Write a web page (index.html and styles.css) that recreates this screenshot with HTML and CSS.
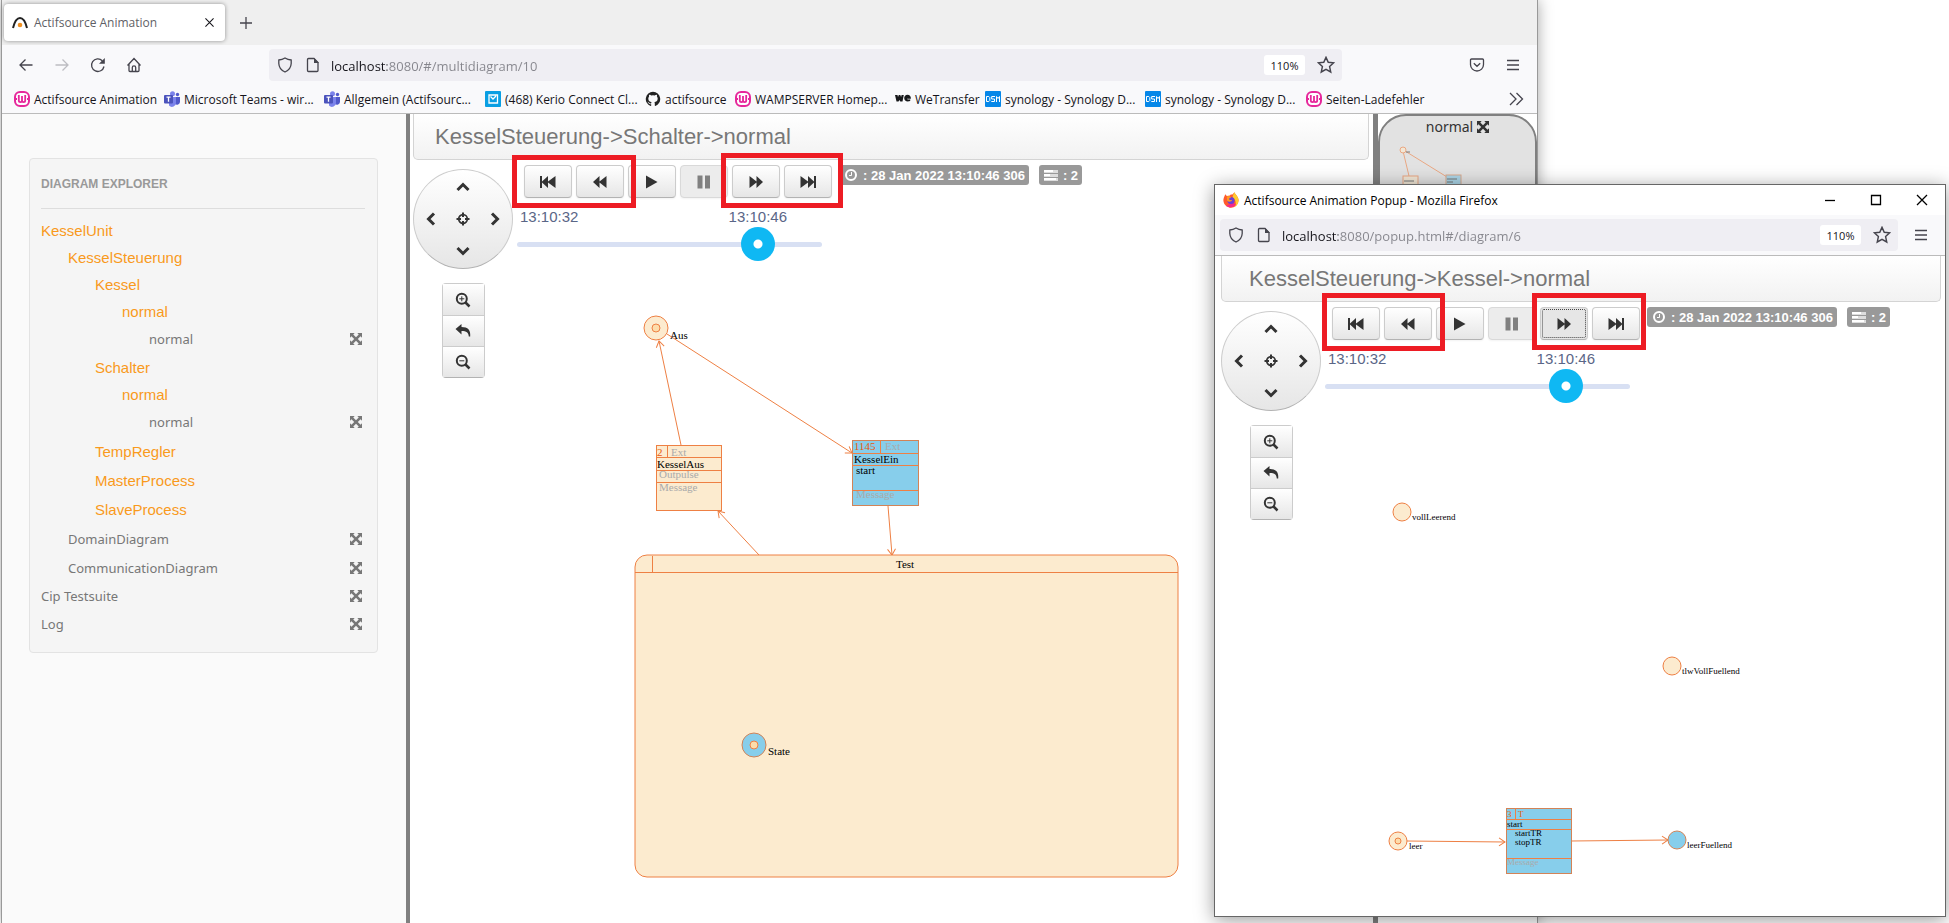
FILE: index.html
```html
<!DOCTYPE html>
<html lang="en">

<head>
  <meta charset="UTF-8">
  <meta name="viewport" content="width=device-width, initial-scale=1.0">
  <title>Actifsource Animation</title>

  <link rel="stylesheet" href="styles.css">
</head>

<body>
  <!-- shared icons -->
  <svg class="sprite" aria-hidden="true">
    <symbol id="i-back" viewBox="0 0 16 16"><path d="M14.500 8H2M7.500 2.500 2 8l5.500 5.500" class="line"/></symbol>
    <symbol id="i-forward" viewBox="0 0 16 16"><path d="M1.500 8H14M8.500 2.500 14 8l-5.500 5.500" class="line"/></symbol>
    <symbol id="i-reload" viewBox="0 0 16 16"><path d="M14 9.500A6.300 6.300 0 1 1 12.300 3.700" class="line"/><path d="M14.800 1v5.800H9z"/></symbol>
    <symbol id="i-home" viewBox="0 0 16 16"><path d="M1.500 8.500 8 1.500l6.500 7M3 7v6.500a1 1 0 0 0 1 1h8a1 1 0 0 0 1-1V7M6.300 14.500v-4a1.700 1.700 0 0 1 3.400 0v4" class="line"/></symbol>
    <symbol id="i-shield" viewBox="0 0 16 16"><path d="M8 1C6 2.300 4 2.900 1.800 3v3.500C2 10.500 4.500 13.500 8 15c3.500-1.500 6-4.500 6.200-8.500V3C12 2.900 10 2.300 8 1z" class="line"/></symbol>
    <symbol id="i-page" viewBox="0 0 16 16"><path d="M3.500 1.500H9l4 4v8a1 1 0 0 1-1 1H3.500a1 1 0 0 1-1-1v-11a1 1 0 0 1 1-1z" class="line"/><path d="M9 1v5h5z"/></symbol>
    <symbol id="i-star" viewBox="0 0 16 16"><path d="M8 1.200l2 4.400 4.800.500-3.600 3.300 1 4.800L8 11.800l-4.200 2.400 1-4.800L1.200 6.100 6 5.600z" class="line"/></symbol>
    <symbol id="i-pocket" viewBox="0 0 16 16"><path d="M2.500 2h11a1 1 0 0 1 1 1v4.500a6.500 6.500 0 0 1-13 0V3a1 1 0 0 1 1-1zM4.800 6.300 8 9.300l3.200-3" class="line"/></symbol>
    <symbol id="i-menu" viewBox="0 0 16 16"><path d="M2 3.500h12M2 8h12M2 12.500h12" class="line"/></symbol>
    <symbol id="i-more" viewBox="0 0 16 16"><path d="M2 2l6 6-6 6M8.500 2l6 6-6 6" class="line"/></symbol>
    <symbol id="i-close" viewBox="0 0 16 16"><path d="M3 3l10 10M13 3 3 13" class="line"/></symbol>
    <symbol id="i-plus" viewBox="0 0 16 16"><path d="M8 2v12M2 8h12" class="line"/></symbol>
    <symbol id="i-min" viewBox="0 0 16 16"><path d="M3 8.500h10" class="line"/></symbol>
    <symbol id="i-max" viewBox="0 0 16 16"><path d="M3.500 3.500h9v9h-9z" class="line"/></symbol>
    <symbol id="i-actif" viewBox="0 0 16 16"><path d="M1 13C2.500 7 5 3 8 3s5.500 4 7 10" fill="none" stroke="#222" stroke-width="2"/><circle cx="8" cy="10" r="2.300" fill="#f09020"/></symbol>
    <symbol id="i-wamp" viewBox="0 0 16 16"><rect x="1" y="1" width="14" height="14" rx="5" fill="#fff" stroke="#e6279b" stroke-width="2"/><path d="M4.800 4v5.500a1.600 1.600 0 0 0 3.200 0V5v4.500a1.600 1.600 0 0 0 3.200 0V4M1 8h2M13 8h2" fill="none" stroke="#e6279b" stroke-width="1.800"/></symbol>
    <symbol id="i-teams" viewBox="0 0 16 16"><circle cx="8.500" cy="2.800" r="2.500" fill="#7b83eb"/><circle cx="13.500" cy="3.500" r="1.700" fill="#5059c9"/><path d="M11 6h5v5a3 3 0 0 1-5 2z" fill="#5059c9"/><path d="M5 6h7v5.500a4 4 0 0 1-7 3z" fill="#7b83eb"/><rect y="4" width="9" height="8.500" rx="1" fill="#4b53bc"/><path d="M2.500 6.200h4M4.500 6.200v4.600" stroke="#fff" stroke-width="1.300"/></symbol>
    <symbol id="i-kerio" viewBox="0 0 16 16"><rect width="16" height="16" rx="1" fill="#0a9fe3"/><path d="M4 4h8.500v8H4zM5.500 5.500 8 8l3-3" fill="none" stroke="#fff" stroke-width="1.300"/></symbol>
    <symbol id="i-github" viewBox="0 0 16 16"><path fill="#222" d="M8 .8a7.300 7.300 0 0 0-2.300 14.200c.4.100.5-.2.500-.4v-1.400c-2 .4-2.500-.9-2.500-.9-.3-.8-.8-1-.8-1-.7-.5 0-.5 0-.5.700.1 1.100.8 1.100.8.700 1.100 1.700.8 2.200.6 0-.5.200-.8.400-1-1.600-.2-3.300-.8-3.300-3.600 0-.8.300-1.400.8-2-.1-.1-.3-.9.100-1.900 0 0 .6-.2 2 .7a7 7 0 0 1 3.600 0c1.400-.9 2-.7 2-.7.4 1 .1 1.800.1 1.900.5.600.8 1.200.8 2 0 2.800-1.700 3.400-3.300 3.600.2.200.4.600.4 1.300v2.100c0 .2.100.5.500.4A7.300 7.300 0 0 0 8 .8z"/></symbol>
    <symbol id="i-we" viewBox="0 0 16 16"><path d="M0 4h2.500l.5 2 .8-2h1.500l.8 2 .5-2h2.200L7.500 10.500H5.300L4.500 9l-1 1.500H1.500zM12.500 3.800c2 0 3.500 1.500 3.400 4h-4c.3.900 1.800 1 3.300.5v1.700c-3 1.200-6 .2-6-2.900 0-2 1.400-3.300 3.300-3.300z" fill="#17181a"/></symbol>
    <symbol id="i-dsm" viewBox="0 0 16 16"><rect width="16" height="16" rx="1" fill="#0687e8"/><path d="M1.500 5.500h2.300l1 1v3l-1 1H1.500zM10 5.500H6.700V8H9.500v2.500H6.300M11.500 11V5.500l1.500 2 1.500-2V11" fill="none" stroke="#fff"/></symbol>
    <symbol id="i-firefox" viewBox="0 0 16 16"><path d="M11.500.3c.3 2 3.900 3.800 4.100 8A7.600 7.600 0 1 1 .9 5.500L2.300 2.200l1.500 1.900 3-.6 1-.9 1.600-.1z" fill="#ff5a2c"/><path d="M11.500.3C11.800 2.300 15.400 4.100 15.600 8.300c0 3-1.600 5.300-3.600 6.500 1.700-3.500.5-7.800-2.500-9.300.5-2 1-3.900 2-5.200z" fill="#ffcb2e"/><path d="M3 14c3 2 8 1.500 10-2l-4-1z" fill="#f5288c"/><circle cx="8" cy="8.500" r="3.600" fill="#6a3fd6"/><path d="M3.800 4.500c1.500-1 3.500-.5 4.500 1-1.500 0-1.700 1-2.500 1.500.6 1 2 1.500 3.500.8-.5 2-3.500 2.800-5.200 1z" fill="#ff9a1f"/></symbol>

    <symbol id="i-fast-backward" viewBox="0 0 16 14"><path d="M0 1h2v5.500L8 1v5.500L15.500 1v12L8 7.500V13L2 7.500V13H0z"/></symbol>
    <symbol id="i-backward" viewBox="0 0 16 14"><path d="M1 7l6.500-6v5.500L14.500 1v12L7.500 7.500V13z"/></symbol>
    <symbol id="i-play" viewBox="0 0 16 14"><path d="M2 .5 13.500 7 2 13.500z"/></symbol>
    <symbol id="i-pause" viewBox="0 0 16 14"><path d="M1.500.5H6.500v13H1.500zM9 .5h5v13H9z"/></symbol>
    <symbol id="i-forward2" viewBox="0 0 16 14"><path d="M15 7l-6.500 6V7.500L1.500 13V1l7 5.500V1z"/></symbol>
    <symbol id="i-fast-forward" viewBox="0 0 16 14"><path d="M16 13h-2V7.500L8 13V7.500L.5 13V1L8 6.500V1l6 5.500V1h2z"/></symbol>
    <symbol id="i-chevron" viewBox="0 0 16 16"><path d="M2.500 11 8 5.500l5.500 5.500" fill="none" stroke="currentColor" stroke-width="3"/></symbol>
    <symbol id="i-target" viewBox="0 0 16 16"><circle cx="8" cy="8" r="4.300" fill="none" stroke="currentColor" stroke-width="1.700"/><path d="M8 1.500v4.500M8 10v4.500M1.500 8h4.500M10 8h4.500" stroke="currentColor" stroke-width="2"/></symbol>
    <symbol id="i-zoom-in" viewBox="0 0 16 16"><circle cx="6.800" cy="6.800" r="5" fill="none" stroke="currentColor" stroke-width="2"/><path d="M10.500 10.500l4 4" stroke="currentColor" stroke-width="2.500"/><path d="M4.300 6.800h5M6.800 4.300v5" stroke="currentColor"/></symbol>
    <symbol id="i-zoom-out" viewBox="0 0 16 16"><circle cx="6.800" cy="6.800" r="5" fill="none" stroke="currentColor" stroke-width="2"/><path d="M10.500 10.500l4 4" stroke="currentColor" stroke-width="2.500"/><path d="M4.300 6.800h5" stroke="currentColor"/></symbol>
    <symbol id="i-reply" viewBox="0 0 16 16"><path d="M6.500 1v3C13 4 15.800 7 15.200 13.500h-1.400C13.500 9.500 11.500 8 6.500 8v3.500L.5 6z"/></symbol>
    <symbol id="i-expand" viewBox="0 0 14 14"><path d="M0 0h5.500L3.800 1.700 7 4.900l3.200-3.200L8.500 0H14v5.500l-1.700-1.700L9.100 7l3.200 3.200L14 8.500V14H8.500l1.700-1.700L7 9.100l-3.200 3.200L5.500 14H0V8.500l1.700 1.700L4.900 7 1.700 3.800 0 5.500z"/></symbol>
    <symbol id="i-clock" viewBox="0 0 14 14"><circle cx="7" cy="7" r="5" fill="none" stroke="currentColor" stroke-width="2"/><path d="M7.500 4v3.500H5" fill="none" stroke="currentColor"/></symbol>
    <symbol id="i-tasks" viewBox="0 0 14 12"><path d="M0 1h14v3H0zM0 5h14v3H0zM0 9h14v3H0z" fill="#ddd"/><path d="M0 1h9v2H0zM0 5h6v2H0zM0 9h12v2H0z"/></symbol>

    <marker id="arrow" viewBox="-8 -6 9 12" refX="0" refY="0" markerWidth="9" markerHeight="12" orient="auto">
      <path d="M-6-4 0 0l-6 4" class="edge"/>
    </marker>
  </svg>

  <main class="window main-window">
    <div class="tabs">
      <div class="tab">
        <svg class="icon"><use href="#i-actif"/></svg>
        <span class="tab-title">Actifsource Animation</span>
        <button class="tab-close" aria-label="Close tab"><svg class="icon-small"><use href="#i-close"/></svg></button>
      </div>
      <button class="tool" aria-label="New tab"><svg class="icon"><use href="#i-plus"/></svg></button>
    </div>

    <div class="toolbar">
      <button class="tool" aria-label="Back"><svg class="icon"><use href="#i-back"/></svg></button>
      <button class="tool" aria-label="Forward" disabled><svg class="icon"><use href="#i-forward"/></svg></button>
      <button class="tool" aria-label="Reload"><svg class="icon"><use href="#i-reload"/></svg></button>
      <button class="tool" aria-label="Home"><svg class="icon"><use href="#i-home"/></svg></button>
      <div class="urlbar urlbar-wide">
        <svg class="icon"><use href="#i-shield"/></svg>
        <svg class="icon"><use href="#i-page"/></svg>
        <input class="url" type="text" aria-label="Address" value="localhost:8080/#/multidiagram/10">
        <button class="zoom-level">110%</button>
        <button class="star" aria-label="Bookmark this page"><svg class="icon-star"><use href="#i-star"/></svg></button>
      </div>
      <button class="tool" aria-label="Pocket"><svg class="icon"><use href="#i-pocket"/></svg></button>
      <button class="tool" aria-label="Menu"><svg class="icon"><use href="#i-menu"/></svg></button>
    </div>

    <nav class="bookmarks">
      <a href="#"><svg class="icon"><use href="#i-wamp"/></svg>Actifsource Animation</a>
      <a href="#"><svg class="icon"><use href="#i-teams"/></svg>Microsoft Teams - wir...</a>
      <a href="#"><svg class="icon"><use href="#i-teams"/></svg>Allgemein (Actifsourc...</a>
      <a href="#"><svg class="icon"><use href="#i-kerio"/></svg>(468) Kerio Connect Cl...</a>
      <a href="#"><svg class="icon"><use href="#i-github"/></svg>actifsource</a>
      <a href="#"><svg class="icon"><use href="#i-wamp"/></svg>WAMPSERVER Homep...</a>
      <a href="#"><svg class="icon"><use href="#i-we"/></svg>WeTransfer</a>
      <a href="#"><svg class="icon"><use href="#i-dsm"/></svg>synology - Synology D...</a>
      <a href="#"><svg class="icon"><use href="#i-dsm"/></svg>synology - Synology D...</a>
      <a href="#"><svg class="icon"><use href="#i-wamp"/></svg>Seiten-Ladefehler</a>
      <button class="more" aria-label="More bookmarks"><svg class="icon"><use href="#i-more"/></svg></button>
    </nav>

    <div class="columns">
      <aside class="sidebar">
        <div class="explorer">
          <h2>Diagram Explorer</h2>
          <ul class="tree">
            <li><a class="unit" href="#">KesselUnit</a>
              <ul>
                <li><a class="unit" href="#">KesselSteuerung</a>
                  <ul>
                    <li><a class="unit" href="#">Kessel</a>
                      <ul>
                        <li><a class="unit" href="#">normal</a>
                          <ul class="leaves">
                            <li><a class="leaf" href="#">normal<svg class="expand"><use href="#i-expand"/></svg></a></li>
                          </ul>
                        </li>
                      </ul>
                    </li>
                    <li><a class="unit" href="#">Schalter</a>
                      <ul>
                        <li><a class="unit" href="#">normal</a>
                          <ul class="leaves">
                            <li><a class="leaf" href="#">normal<svg class="expand"><use href="#i-expand"/></svg></a></li>
                          </ul>
                        </li>
                      </ul>
                    </li>
                    <li><a class="unit tall" href="#">TempRegler</a></li>
                    <li><a class="unit tall" href="#">MasterProcess</a></li>
                    <li><a class="unit tall" href="#">SlaveProcess</a></li>
                  </ul>
                </li>
                <li><a class="leaf tall" href="#">DomainDiagram<svg class="expand"><use href="#i-expand"/></svg></a></li>
                <li><a class="leaf tall" href="#">CommunicationDiagram<svg class="expand"><use href="#i-expand"/></svg></a></li>
              </ul>
            </li>
            <li><a class="leaf" href="#">Cip Testsuite<svg class="expand"><use href="#i-expand"/></svg></a></li>
            <li><a class="leaf tall" href="#">Log<svg class="expand"><use href="#i-expand"/></svg></a></li>
          </ul>
        </div>
      </aside>

      <section class="pane">
        <svg class="canvas">
          <path class="edge" d="M271 331 249 227" marker-end="url(#arrow)"/>
          <path class="edge" d="M257 220 442 339" marker-end="url(#arrow)"/>
          <path class="edge" d="M478 392 482 441" marker-end="url(#arrow)"/>
          <path class="edge" d="M349 441 308 397" marker-end="url(#arrow)"/>

          <circle class="node" cx="246" cy="214" r="12"/>
          <circle class="dot" cx="246" cy="214" r="4"/>
          <text x="260" y="225">Aus</text>

          <rect class="node crisp" x="246" y="331" width="65" height="65"/>
          <path class="edge crisp" d="M246 343h65M246 356h65M246 368h65M257 331v12"/>
          <text class="num" x="247" y="342">2</text>
          <text class="hint" x="261" y="342">Ext</text>
          <text x="247" y="354">KesselAus</text>
          <text class="hint" x="249" y="364">Outpulse</text>
          <text class="hint" x="249" y="377">Message</text>

          <rect class="node active crisp" x="442" y="326" width="66" height="65"/>
          <path class="edge crisp" d="M442 339h66M442 351h66M442 376h66M470 326v13"/>
          <text class="num" x="444" y="336">1145</text>
          <text class="hint" x="475" y="336">Ext</text>
          <text x="444" y="349">KesselEin</text>
          <text x="446" y="360">start</text>
          <text class="hint" x="446" y="384">Message</text>

          <rect class="node" x="225" y="441" width="543" height="322" rx="12"/>
          <path class="edge crisp" d="M225 458h543M242 442v16"/>
          <text x="486" y="454">Test</text>
          <circle class="node active" cx="344" cy="631" r="12"/>
          <circle class="dot" cx="344" cy="631" r="4"/>
          <text x="358" y="641">State</text>
        </svg>

        <h1 class="pane-title">KesselSteuerung-&gt;Schalter-&gt;normal</h1>
        <div class="controls">
          <div class="navigation">
            <div class="joystick">
              <button class="up" aria-label="Up"><svg class="icon"><use href="#i-chevron"/></svg></button>
              <button class="left" aria-label="Left"><svg class="icon"><use href="#i-chevron"/></svg></button>
              <button class="center" aria-label="Center"><svg class="icon"><use href="#i-target"/></svg></button>
              <button class="right" aria-label="Right"><svg class="icon"><use href="#i-chevron"/></svg></button>
              <button class="down" aria-label="Down"><svg class="icon"><use href="#i-chevron"/></svg></button>
            </div>
            <div class="zoom">
              <button aria-label="Zoom in"><svg class="icon"><use href="#i-zoom-in"/></svg></button>
              <button aria-label="Reset zoom"><svg class="icon"><use href="#i-reply"/></svg></button>
              <button aria-label="Zoom out"><svg class="icon"><use href="#i-zoom-out"/></svg></button>
            </div>
          </div>
          <div class="timeline">
            <div class="player">
              <button class="btn" aria-label="First"><svg class="glyph"><use href="#i-fast-backward"/></svg></button>
              <button class="btn" aria-label="Previous"><svg class="glyph"><use href="#i-backward"/></svg></button>
              <button class="btn" aria-label="Play"><svg class="glyph"><use href="#i-play"/></svg></button>
              <button class="btn" aria-label="Pause" disabled><svg class="glyph"><use href="#i-pause"/></svg></button>
              <button class="btn" aria-label="Next"><svg class="glyph"><use href="#i-forward2"/></svg></button>
              <button class="btn" aria-label="Last"><svg class="glyph"><use href="#i-fast-forward"/></svg></button>
            </div>
            <div class="times"><span>13:10:32</span><span>13:10:46</span></div>
            <input class="slider" type="range" min="0" max="240" value="198" aria-label="Time">
          </div>
          <div class="labels">
            <span class="label"><svg class="icon-label"><use href="#i-clock"/></svg>: 28 Jan 2022 13:10:46 306</span>
            <span class="label"><svg class="icon-label"><use href="#i-tasks"/></svg>: 2</span>
          </div>
        </div>
        <div class="highlight highlight-back"></div>
        <div class="highlight highlight-next"></div>
      </section>

      <aside class="thumbs">
        <div class="thumb">
          <a href="#">normal<svg class="expand"><use href="#i-expand"/></svg></a>
          <svg class="preview">
            <path class="edge" d="M23 13 29 38M25 13 67 39"/>
            <circle class="node" cx="23" cy="12" r="3"/>
            <path d="M26 14h4" stroke="#333"/>
            <rect class="node" x="23" y="38" width="15" height="15"/>
            <path d="M24 43h10" stroke="#333"/>
            <rect class="node active" x="66" y="37" width="15" height="15"/>
            <path d="M67 41h10M67 44h6" stroke="#333"/>
          </svg>
        </div>
      </aside>
    </div>
  </main>

  <section class="window popup">
    <header class="titlebar">
      <svg class="icon"><use href="#i-firefox"/></svg>
      <span class="window-title">Actifsource Animation Popup - Mozilla Firefox</span>
      <button aria-label="Minimize"><svg class="icon"><use href="#i-min"/></svg></button>
      <button aria-label="Maximize"><svg class="icon"><use href="#i-max"/></svg></button>
      <button aria-label="Close"><svg class="icon"><use href="#i-close"/></svg></button>
    </header>

    <div class="toolbar">
      <div class="urlbar">
        <svg class="icon"><use href="#i-shield"/></svg>
        <svg class="icon"><use href="#i-page"/></svg>
        <input class="url" type="text" aria-label="Popup address" value="localhost:8080/popup.html#/diagram/6">
        <button class="zoom-level">110%</button>
        <button class="star" aria-label="Bookmark popup"><svg class="icon-star"><use href="#i-star"/></svg></button>
      </div>
      <button class="tool" aria-label="Popup menu"><svg class="icon"><use href="#i-menu"/></svg></button>
    </div>

    <div class="pane">
      <svg class="canvas">
        <path class="edge" d="M192 585 290 586" marker-end="url(#arrow)"/>
        <path class="edge" d="M356 585 453 584" marker-end="url(#arrow)"/>

        <circle class="node" cx="187" cy="256" r="9"/>
        <text x="197" y="264">vollLeerend</text>
        <circle class="node" cx="457" cy="410" r="9"/>
        <text x="467" y="418">tlwVollFuellend</text>
        <circle class="node" cx="183" cy="585" r="9"/>
        <circle class="dot" cx="183" cy="585" r="3"/>
        <text x="194" y="593">leer</text>

        <rect class="node active crisp" x="291" y="552" width="65" height="65"/>
        <path class="edge crisp" d="M291 563h65M291 573h65M291 602h65M300 552v11"/>
        <text class="num" x="292" y="561">3</text>
        <text class="num" x="303" y="561">T</text>
        <text x="292" y="571">start</text>
        <text x="300" y="580">startTR</text>
        <text x="300" y="589">stopTR</text>
        <text class="hint" x="292" y="609">Message</text>

        <circle class="node active" cx="462" cy="584" r="9"/>
        <text x="472" y="592">leerFuellend</text>
      </svg>

      <h1 class="pane-title">KesselSteuerung-&gt;Kessel-&gt;normal</h1>
      <div class="controls">
        <div class="navigation">
          <div class="joystick">
            <button class="up" aria-label="Up"><svg class="icon"><use href="#i-chevron"/></svg></button>
            <button class="left" aria-label="Left"><svg class="icon"><use href="#i-chevron"/></svg></button>
            <button class="center" aria-label="Center"><svg class="icon"><use href="#i-target"/></svg></button>
            <button class="right" aria-label="Right"><svg class="icon"><use href="#i-chevron"/></svg></button>
            <button class="down" aria-label="Down"><svg class="icon"><use href="#i-chevron"/></svg></button>
          </div>
          <div class="zoom">
            <button aria-label="Zoom in"><svg class="icon"><use href="#i-zoom-in"/></svg></button>
            <button aria-label="Reset zoom"><svg class="icon"><use href="#i-reply"/></svg></button>
            <button aria-label="Zoom out"><svg class="icon"><use href="#i-zoom-out"/></svg></button>
          </div>
        </div>
        <div class="timeline">
          <div class="player">
            <button class="btn" aria-label="First"><svg class="glyph"><use href="#i-fast-backward"/></svg></button>
            <button class="btn" aria-label="Previous"><svg class="glyph"><use href="#i-backward"/></svg></button>
            <button class="btn" aria-label="Play"><svg class="glyph"><use href="#i-play"/></svg></button>
            <button class="btn" aria-label="Pause" disabled><svg class="glyph"><use href="#i-pause"/></svg></button>
            <button class="btn pressed" aria-label="Next"><svg class="glyph"><use href="#i-forward2"/></svg></button>
            <button class="btn" aria-label="Last"><svg class="glyph"><use href="#i-fast-forward"/></svg></button>
          </div>
          <div class="times"><span>13:10:32</span><span>13:10:46</span></div>
          <input class="slider" type="range" min="0" max="240" value="198" aria-label="Time">
        </div>
        <div class="labels">
          <span class="label"><svg class="icon-label"><use href="#i-clock"/></svg>: 28 Jan 2022 13:10:46 306</span>
          <span class="label"><svg class="icon-label"><use href="#i-tasks"/></svg>: 2</span>
        </div>
      </div>
      <div class="highlight highlight-back"></div>
      <div class="highlight highlight-next"></div>
    </div>
  </section>
</body>

</html>
```

FILE: styles.css
```css
* {
  box-sizing: border-box;
}

body {
  margin: 0px;
  height: 100vh;
  position: relative;
  overflow: hidden;
  background-color: #fff;
  font-family: "Open Sans", "Noto Sans", sans-serif;
  font-size: 12px;
  color: #15141a;
}

button {
  padding: 0px;
  border: none;
  background: none;
  font: inherit;
  color: inherit;
  display: flex;
  align-items: center;
  justify-content: center;
}

a {
  color: inherit;
  text-decoration: none;
}

ul {
  list-style: none;
  margin: 0px;
  padding: 0px;
}

svg {
  fill: currentColor;
  flex: none;
}

.sprite {
  position: absolute;
  width: 0px;
  height: 0px;
}

.line {
  fill: none;
  stroke: currentColor;
  stroke-width: 1.3;
}

.icon {
  width: 16px;
  height: 16px;
}

.icon-small {
  width: 13px;
  height: 13px;
}

.icon-star {
  width: 18px;
  height: 18px;
}

/* windows */

.window {
  position: absolute;
  display: flex;
  flex-direction: column;
  background-color: #fff;
}

.main-window {
  left: 1px;
  right: 411px;
  top: 0px;
  bottom: 0px;
  border-left: 1px solid #999;
  border-right: 1px solid #999;
  box-shadow: 0px 0px 14px rgba(0, 0, 0, 0.35);
}

.popup {
  left: 1214px;
  right: 3px;
  top: 184px;
  bottom: 6px;
  border: 1px solid #666;
  box-shadow: 0px 3px 18px rgba(0, 0, 0, 0.4);
}

/* browser chrome */

.tabs {
  height: 45px;
  display: flex;
  align-items: center;
  background-color: #efefef;
}

.tab {
  width: 221px;
  height: 37px;
  margin: 0px 3px 0px 2px;
  padding: 0px 8px;
  display: flex;
  align-items: center;
  gap: 6px;
  background-color: #fff;
  border-radius: 4px;
  box-shadow: 0px 0px 4px rgba(0, 0, 0, 0.4);
}

.tab-title {
  flex: 1;
  color: #5f5f66;
}

.tab-close {
  width: 16px;
  height: 16px;
}

.toolbar {
  display: flex;
  align-items: center;
  padding: 4px 6px 4px 6px;
  background-color: #f9f9fb;
}

.tool {
  width: 36px;
  height: 32px;
  color: #45444d;
}

.tool:disabled {
  color: #bdbdc2;
}

.urlbar {
  flex: 1;
  height: 32px;
  padding: 0px 7px 0px 8px;
  display: flex;
  align-items: center;
  gap: 12px;
  border-radius: 4px;
  background-color: #efeef3;
  color: #45444d;
}

.urlbar-wide {
  margin: 0px 117px;
}

.url {
  flex: 1;
  min-width: 0px;
  height: 24px;
  margin-left: -2px;
  padding: 1px 0px 0px 0px;
  border: none;
  outline: none;
  font: 13px "Open Sans", "Noto Sans", sans-serif;
  /* host dark, the rest of the address grey */
  background: linear-gradient(to right, #15141a 56px, #85858c 56px);
  -webkit-background-clip: text;
  background-clip: text;
  color: transparent;
}

.zoom-level {
  width: 41px;
  height: 20px;
  border-radius: 3px;
  background-color: #fff;
  font-size: 11px;
  color: #15141a;
}

.star {
  width: 18px;
  height: 18px;
}

.bookmarks {
  height: 29px;
  padding: 0px 3px 0px 12px;
  display: grid;
  grid-template-columns: 150px 160px 161px 160px 90px 160px 90px 160px 161px 1fr 36px;
  align-items: center;
  background-color: #f9f9fb;
  border-bottom: 1px solid #bbb;
}

.bookmarks a {
  display: flex;
  align-items: center;
  gap: 4px;
  white-space: nowrap;
}

.more {
  height: 24px;
  color: #45444d;
}

.titlebar {
  height: 30px;
  display: flex;
  align-items: center;
  padding-left: 8px;
  color: #000;
}

.window-title {
  flex: 1;
  margin-left: 5px;
}

.titlebar button {
  width: 46px;
  height: 30px;
}

.popup .toolbar {
  padding: 4px 6px 4px 5px;
  border-bottom: 1px solid #bbb;
}

.popup .urlbar {
  margin-right: 5px;
}

/* page */

.columns {
  flex: 1;
  display: grid;
  grid-template-columns: 408px minmax(0, 1fr) 164px;
}

.sidebar {
  padding: 44px 28px 0px 27px;
  border-right: 4px solid #808080;
  background-color: #fafafa;
}

.explorer {
  padding: 15px 12px 14px 11px;
  border: 1px solid #e3e3e3;
  border-radius: 4px;
  background-color: #f5f5f5;
}

.explorer h2 {
  margin: 0px 0px 8px 0px;
  padding-bottom: 14px;
  border-bottom: 1px solid #ddd;
  font: bold 12px/20px "Liberation Sans", sans-serif;
  text-transform: uppercase;
  color: #999;
}

.tree ul {
  padding-left: 27px;
}

.tree .leaves {
  margin-bottom: 2px;
}

.unit,
.leaf {
  display: flex;
  align-items: center;
  justify-content: space-between;
  height: 27px;
  padding-right: 3px;
}

.tall {
  height: 29px;
}

.unit {
  font: 15px "Liberation Sans", sans-serif;
  color: #f99a1c;
}

.leaf {
  font: 13px "Noto Sans", sans-serif;
  color: #777;
}

.expand {
  width: 12px;
  height: 12px;
}

.pane {
  flex: 1;
  position: relative;
  padding: 0px 4px 0px 3px;
  font-family: "Liberation Sans", sans-serif;
}

.popup .pane {
  padding: 0px 4px 0px 6px;
}

.pane-title {
  position: relative;
  margin: 0px;
  padding: 0px 21px;
  border: 1px solid #d4d4d4;
  border-top: none;
  border-radius: 0px 0px 5px 5px;
  background: linear-gradient(#fff, #f2f2f2);
  font-size: 22px;
  font-weight: normal;
  line-height: 45px;
  color: #777;
}

.popup .pane-title {
  padding: 0px 27px;
}

.controls {
  position: relative;
  display: flex;
  align-items: flex-start;
  color: #333;
}

.navigation {
  margin-top: 9px;
  display: flex;
  flex-direction: column;
  align-items: center;
  gap: 14px;
}

.joystick {
  width: 100px;
  height: 100px;
  display: grid;
  grid-template: 32px 32px 32px / 32px 32px 32px;
  place-content: center;
  border: 1px solid #ccc;
  border-bottom-color: #b3b3b3;
  border-radius: 50%;
  background: linear-gradient(#fff, #e6e6e6);
}

.up {
  grid-area: 1 / 2;
}

.left {
  grid-area: 2 / 1;
}

.center {
  grid-area: 2 / 2;
}

.right {
  grid-area: 2 / 3;
}

.down {
  grid-area: 3 / 2;
}

.left .icon {
  transform: rotate(-90deg);
}

.right .icon {
  transform: rotate(90deg);
}

.down .icon {
  transform: rotate(180deg);
}

.zoom {
  width: 43px;
  border: 1px solid #ccc;
  border-bottom-color: #b3b3b3;
  border-radius: 4px;
}

.zoom button {
  width: 100%;
  height: 31px;
  background: linear-gradient(#fff, #e6e6e6);
}

.zoom button + button {
  border-top: 1px solid #ccc;
}

.timeline {
  width: 315px;
  margin: 5px 0px 0px 4px;
}

.player {
  display: flex;
  gap: 4px;
  padding-left: 7px;
}

.btn {
  width: 48px;
  height: 33px;
  border: 1px solid #ccc;
  border-bottom-color: #b3b3b3;
  border-radius: 4px;
  background: linear-gradient(#fff, #e6e6e6);
  box-shadow: 0px 1px 2px rgba(0, 0, 0, 0.05);
}

.btn:disabled {
  border-color: #d9d9d9;
  background: #ececec;
  color: #808080;
}

.pressed {
  background: #e6e6e6;
  outline: 1px dotted #444;
  outline-offset: -3px;
}

.glyph {
  width: 16px;
  height: 14px;
}

.times {
  width: 305px;
  margin-top: 9px;
  padding: 0px 35px 0px 3px;
  display: flex;
  justify-content: space-between;
  font-size: 15px;
  line-height: 20px;
  color: #5a6687;
}

.slider {
  display: block;
  width: 305px;
  height: 34px;
  margin: 0px;
  appearance: none;
  background: none;
}

.slider::-webkit-slider-runnable-track {
  height: 5px;
  border-radius: 3px;
  background-color: #d8e0f3;
}

.slider::-webkit-slider-thumb {
  appearance: none;
  width: 34px;
  height: 34px;
  margin-top: -15px;
  border-radius: 50%;
  background: radial-gradient(circle, #fff 4px, #0fb8f3 5px);
}

.labels {
  margin: 5px 0px 0px 7px;
  display: flex;
  gap: 10px;
}

.label {
  height: 20px;
  padding: 0px 4px 0px 5px;
  display: flex;
  align-items: center;
  gap: 5px;
  border-radius: 3px;
  background-color: #999;
  font-size: 13px;
  font-weight: bold;
  white-space: nowrap;
  color: #fff;
}

.icon-label {
  width: 14px;
  height: 14px;
}

/* red frames over the player buttons */

.highlight {
  position: absolute;
  border: 5px solid #ed1c24;
}

.highlight-back {
  left: 102px;
  top: 41px;
  width: 124px;
  height: 53px;
}

.highlight-next {
  left: 311px;
  top: 39px;
  width: 122px;
  height: 55px;
}

.popup .highlight-back {
  left: 107px;
  top: 37px;
  width: 123px;
  height: 58px;
}

.popup .highlight-next {
  left: 317px;
  top: 37px;
  width: 114px;
  height: 57px;
}

/* diagrams */

.canvas {
  position: absolute;
  left: 0px;
  top: 0px;
  width: 100%;
  height: 100%;
  font: 11px "Liberation Serif", serif;
  fill: #000;
}

.popup .canvas {
  font-size: 9px;
}

.edge {
  fill: none;
  stroke: #ee8044;
}

.node {
  fill: #fcebcf;
  stroke: #ee8044;
}

.active {
  fill: #87ceeb;
  stroke: #d28357;
}

.dot {
  fill: #fddcaa;
  stroke: #ee8044;
}

.crisp {
  shape-rendering: crispEdges;
}

.num {
  fill: #e8590c;
}

.hint {
  fill: #aaa;
}

.thumbs {
  border-left: 5px solid #808080;
}

.thumb {
  height: 150px;
  border: 2px solid #808080;
  border-radius: 28px;
  background-color: #e2e2e2;
}

.thumb a {
  display: flex;
  align-items: center;
  justify-content: center;
  gap: 4px;
  font: 14px/22px "Noto Sans", sans-serif;
  color: #333;
}

.preview {
  display: block;
  width: 100%;
  height: 100px;
  opacity: 0.6;
}
```
